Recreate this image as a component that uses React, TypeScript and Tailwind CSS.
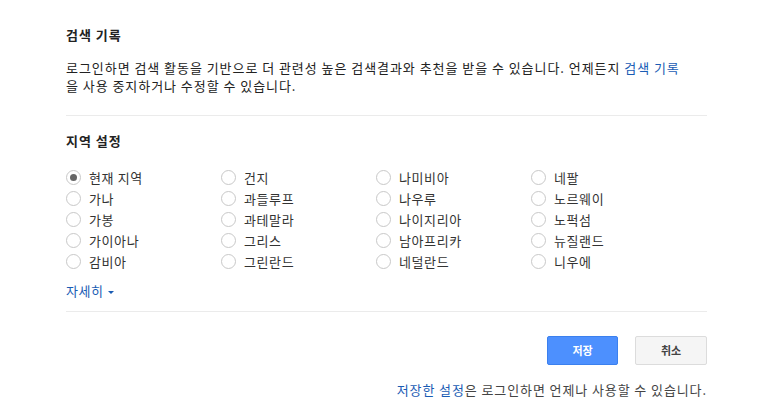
import React from "react";

const cols = [
  ["현재 지역", "가나", "가봉", "가이아나", "감비아"],
  ["건지", "과들루프", "과테말라", "그리스", "그린란드"],
  ["나미비아", "나우루", "나이지리아", "남아프리카", "네덜란드"],
  ["네팔", "노르웨이", "노퍽섬", "뉴질랜드", "니우에"],
];

function Radio({ checked }: { checked?: boolean }) {
  return (
    <span className="w-[15px] h-[15px] rounded-full border border-[#c8c8c8] bg-white flex items-center justify-center shrink-0">
      {checked && <span className="w-[7px] h-[7px] rounded-full bg-[#666]" />}
    </span>
  );
}

export default function App() {
  return (
    <div
      className="w-[770px] h-[415px] bg-white text-[#222] text-[13px]"
      style={{ fontFamily: '"Noto Sans CJK KR", "Noto Sans", sans-serif' }}
    >
      <div className="ml-[66px] w-[641px] pt-[26px]">
        <div className="font-bold text-[13px] leading-[18px] tracking-[1px]">검색 기록</div>
        <p className="mt-[15px] leading-[18px] text-[#222] tracking-[0.95px]">
          로그인하면 검색 활동을 기반으로 더 관련성 높은 검색결과와 추천을 받을 수 있습니다. 언제든지{" "}
          <span className="text-[#1a5cb4]">검색 기록</span>
          <br />을 사용 중지하거나 수정할 수 있습니다.
        </p>
        <div className="mt-[20px] h-px bg-[#ebebeb]" />
        <div className="mt-[16px] font-bold leading-[18px] tracking-[1px]">지역 설정</div>
        <div className="mt-[17px] grid grid-cols-4 w-[620px]">
          {cols.map((c, i) => (
            <div key={i} className="flex flex-col">
              {c.map((name, j) => (
                <div key={j} className="h-[21px] flex items-center gap-[8px]">
                  <Radio checked={i === 0 && j === 0} />
                  <span className="leading-[18px] text-[#333] tracking-[0.6px]">{name}</span>
                </div>
              ))}
            </div>
          ))}
        </div>
        <div className="mt-[10px] flex items-center gap-[4px] text-[#1a5cb4] leading-[18px] tracking-[0.6px]">
          <span>자세히</span>
          <span className="w-0 h-0 border-l-[3px] border-r-[3px] border-t-[3px] border-l-transparent border-r-transparent border-t-[#1a5cb4] mt-[2px]" />
        </div>
        <div className="mt-[11px] h-px bg-[#ebebeb]" />
        <div className="mt-[24px] flex justify-end gap-[17px]">
          <button className="w-[71px] h-[29px] rounded-[2px] bg-[#4d90fe] border border-[#3b80ee] text-white font-bold text-[11px]">
            저장
          </button>
          <button className="w-[72px] h-[29px] rounded-[2px] bg-[#f5f5f5] border border-[#dcdcdc] text-[#444] font-bold text-[11px]">
            취소
          </button>
        </div>
        <div className="mt-[16px] text-right leading-[18px] text-[#444] tracking-[0.9px]">
          <span className="text-[#1a5cb4]">저장한 설정</span>은 로그인하면 언제나 사용할 수 있습니다.
        </div>
      </div>
    </div>
  );
}
